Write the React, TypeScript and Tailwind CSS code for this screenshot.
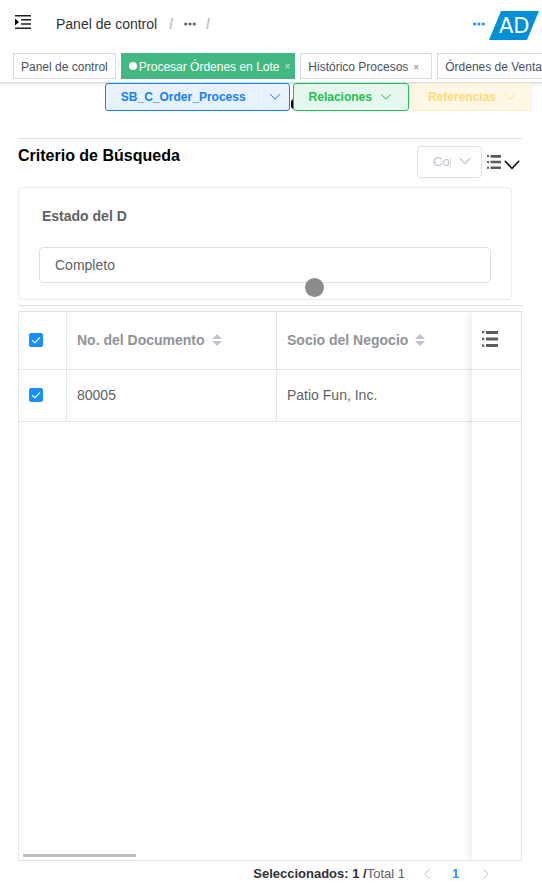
import React from 'react';

function Chevron({ className }: { className: string }) {
  return (
    <svg viewBox="0 0 12 12" fill="none" stroke="currentColor" strokeLinecap="round" className={className} aria-hidden="true">
      <path d="M1.500 3.500 6 8.300l4.500-4.800" />
    </svg>
  );
}

function ListIcon({ className }: { className: string }) {
  return (
    <svg viewBox="0 0 16 16" fill="#5a5c62" className={className} aria-hidden="true">
      <path d="M0 0h2.300v2.300H0zM4 0h12v3H4zM0 6.800h2.300v2.300H0zM4 6.500h12v3H4zM0 13.500h2.300v2.300H0zM4 13h12v3H4z" />
    </svg>
  );
}

function Dots({ className }: { className: string }) {
  return (
    <svg viewBox="0 0 12 4" fill="currentColor" className={className} aria-hidden="true">
      <circle cx="1.700" cy="2" r="1.600" />
      <circle cx="6" cy="2" r="1.600" />
      <circle cx="10.300" cy="2" r="1.600" />
    </svg>
  );
}

function SortIcon() {
  return (
    <svg viewBox="0 0 10 12" fill="#c0c4cc" className="h-3 w-[10px]" aria-hidden="true">
      <path d="M0 5 5 0l5 5zM0 7h10l-5 5z" />
    </svg>
  );
}

function Check({ id, label }: { id: string; label: string }) {
  return (
    <span className="relative block size-[14px]">
      <input
        id={id}
        type="checkbox"
        defaultChecked
        aria-label={label}
        className="peer block size-[14px] appearance-none rounded-xs border border-[#dcdfe6] checked:border-[#1890ff] checked:bg-[#1890ff]"
      />
      <svg viewBox="0 0 14 14" fill="none" stroke="white" strokeWidth="1.200" className="pointer-events-none absolute inset-0 hidden peer-checked:block" aria-hidden="true">
        <path d="m3.200 7.200 2.600 2.600L11 4.300" />
      </svg>
    </span>
  );
}

function Header() {
  return (
    <header className="relative flex h-[50px] items-center bg-white shadow-[0_1px_4px_rgba(0,21,41,0.08)]">
      <button aria-label="Menú" className="mb-[6px] ml-[15px]">
        <svg viewBox="0 0 16 14" className="h-[14px] w-4" aria-hidden="true">
          <path d="M0 .7h16M6 4.800h10M6 9h10M0 13.300h16" stroke="#1f1f1f" strokeWidth="1.400" />
          <path d="M0 3.500 4 7 0 10.500z" fill="#000" />
        </svg>
      </button>
      <nav aria-label="Ruta" className="ml-[25px] flex items-center pb-[2px] text-sm leading-5 text-[#303133]">
        <a href="#panel">Panel de control</a>
        <span className="ml-3 font-bold text-[#c0c4cc]">/</span>
        <button aria-label="Más niveles" className="ml-[11px] text-[#606266]">
          <Dots className="h-1 w-3" />
        </button>
        <span className="ml-[10px] font-bold text-[#c0c4cc]">/</span>
      </nav>
      <div className="ml-auto mr-[3px] flex items-center gap-1 text-[#1890ff]">
        <button aria-label="Más opciones" className="pb-[2px]">
          <Dots className="h-1 w-3" />
        </button>
        <svg viewBox="0 0 50 29" className="h-[29px] w-[50px]" role="img" aria-label="AD">
          <path d="M12 0h38L38 29H0z" fill="#0090d8" />
          <text x="10" y="22" fontSize="21" fill="#fff" fontFamily="DejaVu Sans, sans-serif">AD</text>
        </svg>
      </div>
    </header>
  );
}

function Tags() {
  const plain = 'h-[26px] shrink-0 border border-[#d8dce5] bg-white px-[7px] pt-[2px] text-[#495060]';
  return (
    <nav aria-label="Pestañas" className="relative z-10 flex h-[33px] items-start gap-[5px] overflow-hidden border-b border-[#d8dce5] bg-white pl-[13px] pt-[3px] text-xs whitespace-nowrap">
      <button className={plain}>Panel de control</button>
      <button className="flex h-[26px] shrink-0 items-center bg-[#42b983] pl-2 pr-[5px] pt-[2px] text-white">
        <span className="mb-[2px] mr-[2px] size-2 rounded-full bg-white" />
        Procesar Órdenes en Lote
        <span className="ml-[5px] text-[10px] text-white/70">×</span>
      </button>
      <button className={plain}>
        Histórico Procesos<span className="mx-[5px] text-[10px] text-[#80858f]">×</span>
      </button>
      <button className={plain}>
        Órdenes de Venta<span className="mx-[5px] text-[10px] text-[#80858f]">×</span>
      </button>
    </nav>
  );
}

function Actions() {
  return (
    <div className="relative flex h-7 justify-end gap-[3px] pr-[10px] text-xs font-bold shadow-[inset_0_3px_3px_-2px_rgba(0,0,0,0.12)]">
      <span className="absolute right-[244px] top-4 h-[10px] w-[7px] rounded-full bg-black" />
      <div className="relative flex rounded-[3px] border border-[#1080ff] bg-[#e8f2ff] text-[#1080ff]">
        <button className="px-[15px]">SB_C_Order_Process</button>
        <button aria-label="Más procesos" className="w-[28px] border-l border-dotted border-white">
          <Chevron className="mx-auto size-3" />
        </button>
      </div>
      <button className="relative flex items-center gap-2 rounded-[3px] border border-[#20c050] bg-[#e6f8ed] pl-[15px] pr-4 text-[#20c050]">
        Relaciones <Chevron className="size-3" />
      </button>
      <button disabled className="relative flex items-center gap-2 rounded-[3px] border border-[#fff1cc] bg-[#fff8e6] px-[15px] text-[#ffdc78]">
        Referencias <Chevron className="size-3" />
      </button>
    </div>
  );
}

function Search() {
  return (
    <section className="mt-[27px] border-y border-[#dcdfe6] pb-[5px]">
      <div className="flex h-12 items-start">
        <h2 className="mt-[7px] text-base leading-5 font-bold text-black">Criterio de Búsqueda</h2>
        <div className="relative ml-auto mt-[7px] text-[#c0c4cc]">
          <select disabled aria-label="Columnas" className="block h-8 w-[65px] appearance-none rounded border border-[#dcdfe6] bg-white pl-[15px] pr-[30px] text-[13px] opacity-100">
            <option>Columnas</option>
          </select>
          <Chevron className="pointer-events-none absolute right-[10px] top-2 size-[14px]" />
        </div>
        <button aria-label="Lista de campos" className="ml-[5px] mt-4">
          <ListIcon className="size-[14px]" />
        </button>
        <button aria-label="Contraer" className="mt-[17px] ml-[2px] mr-px text-black">
          <Chevron className="size-[18px]" />
        </button>
      </div>
      <div className="mr-[10px] flex h-[113px] flex-col rounded border border-[#e6ebf5] px-5">
        <label htmlFor="estado" className="ml-[3px] mt-[18px] text-sm font-bold text-[#606266]">Estado del D</label>
        <input id="estado" defaultValue="Completo" className="mt-[21px] h-9 rounded border border-[#dcdfe6] bg-white px-[15px] text-sm text-[#606266]" />
      </div>
    </section>
  );
}

function Records() {
  return (
    <section className="relative mt-[5px] flex-1 overflow-hidden border border-[#dfe6ec]">
      <table className="w-full table-fixed border-separate border-spacing-0 text-left text-sm text-[#606266]">
        <colgroup>
          <col className="w-12" />
          <col className="w-[210px]" />
          <col />
          <col className="w-[49px]" />
        </colgroup>
        <thead className="text-[#909399]">
          <tr className="h-[58px]">
            <th className="border-r border-b border-[#dfe6ec] pl-[10px] pb-[2px]"><Check id="todos" label="Seleccionar todos" /></th>
            <th className="border-r border-b border-[#dfe6ec] pl-[10px] pb-[2px]">
              <span className="flex items-center gap-[7px]">No. del Documento <SortIcon /></span>
            </th>
            <th className="border-b border-[#dfe6ec] pl-[10px] pb-[2px]">
              <span className="flex items-center gap-[7px]">Socio del Negocio <SortIcon /></span>
            </th>
            <th className="border-b border-[#dfe6ec] pl-[10px] pb-[2px]">
              <button aria-label="Elegir columnas" className="mb-[2px] block"><ListIcon className="size-4" /></button>
            </th>
          </tr>
        </thead>
        <tbody>
          <tr className="h-[52px]">
            <td className="border-r border-b border-[#dfe6ec] pl-[10px] pb-[2px]"><Check id="fila" label="Seleccionar 80005" /></td>
            <td className="border-r border-b border-[#dfe6ec] pl-[10px] pb-[2px]">80005</td>
            <td className="border-b border-[#dfe6ec] pl-[10px] pb-[2px]">Patio Fun, Inc.</td>
            <td className="border-b border-[#dfe6ec]" />
          </tr>
        </tbody>
      </table>
      <div className="pointer-events-none absolute inset-y-0 right-0 w-[49px] shadow-[0_0_10px_rgba(0,0,0,0.14)]" />
      <div className="absolute bottom-[3px] left-1 h-[3px] w-[113px] bg-[#bfbfbf]" />
    </section>
  );
}

function Pagination() {
  return (
    <footer className="flex h-[29px] items-center justify-end pb-[3px] text-[13px] text-[#606266]">
      <p><strong className="text-[#303133]">Seleccionados: 1 /</strong>Total 1</p>
      <button aria-label="Anterior" disabled className="ml-4 text-[#c0c4cc]">
        <Chevron className="size-3 rotate-90" />
      </button>
      <button className="ml-4 w-[13px] text-xs font-bold text-[#1890ff]">1</button>
      <button aria-label="Siguiente" disabled className="ml-[18px] mr-[30px] text-[#c0c4cc]">
        <Chevron className="size-3 -rotate-90" />
      </button>
    </footer>
  );
}

export default function App() {
  return (
    <div className="relative flex min-h-screen flex-col overflow-hidden bg-white font-['Liberation_Sans',Arial,sans-serif]">
      <Header />
      <Tags />
      <Actions />
      <main className="flex flex-1 flex-col pl-[18px] pr-5">
        <Search />
        <Records />
        <Pagination />
      </main>
      <span className="pointer-events-none absolute left-[305px] top-[278px] size-[19px] rounded-full bg-[#777]/85" />
    </div>
  );
}
